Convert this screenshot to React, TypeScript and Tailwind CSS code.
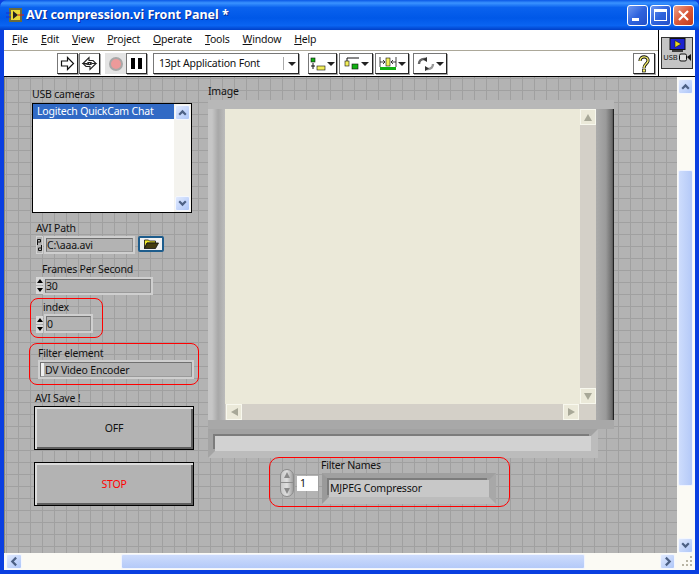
import React from "react";

const F = { fontFamily: '"Noto Sans", Tahoma, sans-serif' };

function Arrow({ d, className = "" }: { d: "up" | "down" | "left" | "right"; className?: string }) {
  const p = { up: "M2 7l3-3 3 3", down: "M2 3l3 3 3-3", left: "M6.5 1.5L3 5l3.5 3.5", right: "M3.5 1.5L7 5 3.5 8.5" }[d];
  return (
    <svg viewBox="0 0 10 10" className={className} width="11" height="11" fill="none" stroke="#4d6185" strokeWidth="2">
      <path d={p} />
    </svg>
  );
}

function XpBtn({ d, className = "" }: { d: "up" | "down" | "left" | "right"; className?: string }) {
  return (
    <div className={"flex items-center justify-center rounded-[2px] border border-[#f4f7fe] bg-gradient-to-br from-[#e1eafe] to-[#aec6f8] " + className}>
      <Arrow d={d} />
    </div>
  );
}

function Label({ x, y, children }: { x: number; y: number; children: React.ReactNode }) {
  return (
    <div className="absolute text-[10.5px] leading-[14px] tracking-[-0.2px] text-[#111] whitespace-nowrap" style={{ left: x, top: y }}>
      {children}
    </div>
  );
}

function Box({ x, y, w, h, children, cls = "" }: { x: number; y: number; w: number; h: number; children?: React.ReactNode; cls?: string }) {
  return (
    <div
      className={"absolute box-border flex items-center border-2 border-[#cfcfcf] " + cls}
      style={{ left: x, top: y, width: w, height: h }}
    >
      <div className="flex h-full w-full items-center border border-t-[#707070] border-l-[#707070] border-r-[#8c8c8c] border-b-[#9a9a9a] bg-[#b3b3b3] text-[10.5px] leading-[14px] tracking-[-0.2px] text-[#111] whitespace-nowrap">
        {children}
      </div>
    </div>
  );
}

function Spin({ x, y }: { x: number; y: number }) {
  return (
    <div className="absolute flex w-[7px] flex-col gap-[1px]" style={{ left: x, top: y }}>
      <div className="flex h-[8px] items-center justify-center bg-[#d8d8d8]">
        <div className="h-0 w-0 border-x-[3px] border-b-[4px] border-x-transparent border-b-black" />
      </div>
      <div className="flex h-[8px] items-center justify-center bg-[#d8d8d8]">
        <div className="h-0 w-0 border-x-[3px] border-t-[4px] border-x-transparent border-t-black" />
      </div>
    </div>
  );
}

function Big({ y, color, text }: { y: number; color: string; text: string }) {
  return (
    <div
      className="absolute box-border flex h-[44px] w-[160px] items-center justify-center border border-black bg-[#b3b3b3] pt-[1px] text-[10.5px] tracking-[-0.2px]"
      style={{ left: 34, top: y, color, boxShadow: "inset 2px 2px 0 0 #dcdcdc, inset -2px -2px 0 0 #5e5e5e" }}
    >
      {text}
    </div>
  );
}

function RedBox({ x, y, w, h, r = 8 }: { x: number; y: number; w: number; h: number; r?: number }) {
  return <div className="absolute box-border border border-[#f00]" style={{ left: x, top: y, width: w, height: h, borderRadius: r }} />;
}

function ToolBtn({ children, w = 22, cls = "" }: { children: React.ReactNode; w?: number; cls?: string }) {
  return (
    <div
      className={"box-border flex h-[21px] items-center justify-center border border-t-[#777] border-l-[#777] border-r-[#222] border-b-[#222] bg-white shadow-[1px_1px_0_#a8a8a8] " + cls}
      style={{ width: w }}
    >
      {children}
    </div>
  );
}

const Caret = () => <div className="ml-[1px] h-0 w-0 border-x-[4px] border-t-[4px] border-x-transparent border-t-[#222]" />;

function WinBtn({ children, red }: { children: React.ReactNode; red?: boolean }) {
  return (
    <div
      className={
        "flex h-[21px] w-[21px] items-center justify-center rounded-[3px] border border-white " +
        (red ? "bg-gradient-to-br from-[#e9a08a] via-[#d9593a] to-[#c23a1a]" : "bg-gradient-to-br from-[#6f97f0] via-[#2f63dd] to-[#2450c8]")
      }
    >
      {children}
    </div>
  );
}

export default function App() {
  return (
    <div className="flex h-[574px] w-[699px] flex-col overflow-hidden bg-[#0a3fe0]" style={F}>
      {/* title bar */}
      <div className="flex h-[30px] shrink-0 items-center rounded-t-[7px] bg-[linear-gradient(to_bottom,#0a58e6_0%,#3a93ff_10%,#0a62ee_25%,#0058e8_60%,#0a64f2_85%,#0040c8_100%)] pl-[6px] pr-[5px]">
        <svg width="18" height="16" viewBox="0 0 18 16" className="shrink-0">
          <rect x="3" y="1" width="13" height="14" fill="#6b6b3a" />
          <rect x="5" y="3" width="9" height="10" fill="#e7d83a" />
          <path d="M7 4l5 4-5 4z" fill="#222" />
          <path d="M0 6h5M0 10h5" stroke="#1a2fd0" />
          <path d="M12 8h6" stroke="#e01818" />
        </svg>
        <div className="ml-[2px] text-[12.5px] font-bold leading-none text-white [text-shadow:1px_1px_0_#0a2a90]">AVI compression.vi Front Panel *</div>
        <div className="ml-auto flex gap-[2px]">
          <WinBtn><div className="mt-[9px] mr-[4px] h-[3px] w-[7px] bg-white" /></WinBtn>
          <WinBtn><div className="h-[12px] w-[13px] border border-t-[3px] border-white" /></WinBtn>
          <WinBtn red>
            <svg width="13" height="13" viewBox="0 0 13 13"><path d="M2 2l9 9M11 2l-9 9" stroke="#fff" strokeWidth="2.2" /></svg>
          </WinBtn>
        </div>
      </div>

      {/* client */}
      <div className="mx-[4px] mb-[4px] flex min-h-0 flex-1 flex-col bg-white">
        {/* menus + toolbar + icon */}
        <div className="flex h-[47px] shrink-0 border-b border-black">
          <div className="flex min-w-0 flex-1 flex-col">
            <div className="flex h-[21px] shrink-0 items-center gap-[13px] border-b border-[#aca899] pl-[8px] text-[10.5px] tracking-[-0.2px] text-[#111]">
              <span><u>F</u>ile</span>
              <span><u>E</u>dit</span>
              <span><u>V</u>iew</span>
              <span><u>P</u>roject</span>
              <span><u>O</u>perate</span>
              <span><u>T</u>ools</span>
              <span><u>W</u>indow</span>
              <span><u>H</u>elp</span>
            </div>
            <div className="flex flex-1 items-center pl-[53px]">
              <ToolBtn w={21}>
                <svg width="15" height="15" viewBox="0 0 15 15"><path d="M1.5 5h6V1.5l6 6-6 6V10h-6z" fill="#fff" stroke="#111" strokeWidth="1.2" /></svg>
              </ToolBtn>
              <ToolBtn w={21} cls="ml-[1px]">
                <svg width="17" height="17" viewBox="0 0 17 17" fill="none" stroke="#222" strokeWidth="1.1">
                  <path d="M2 8.5L8 2.5v3h4l3 3h-4l-1-1H7l1 2z" />
                  <path d="M15 8.5L9 14.5v-3H5l-3-3h4l1 1h3l-1-2" />
                </svg>
              </ToolBtn>
              <div className="ml-[5px] flex h-[21px] w-[21px] items-center justify-center bg-[#e4e4e4]">
                <div className="h-[14px] w-[14px] rounded-full border-2 border-[#a8a8a8] bg-[#ec9a9a]" />
              </div>
              <ToolBtn w={21}>
                <div className="flex gap-[3px]"><div className="h-[11px] w-[4px] bg-black" /><div className="h-[11px] w-[4px] bg-black" /></div>
              </ToolBtn>
              <div className="ml-[6px] box-border flex h-[21px] w-[146px] items-center border border-t-[#777] border-l-[#777] border-r-[#222] border-b-[#222] pl-[5px] text-[10.5px] tracking-[-0.2px] text-[#111] shadow-[1px_1px_0_#a8a8a8]">
                <span>13pt Application Font</span>
                <div className="ml-auto flex h-full w-[18px] items-center justify-center py-[3px]">
                  <div className="mr-[3px] h-full w-[1px] bg-[#aaa]" />
                  <Caret />
                </div>
              </div>
              <ToolBtn w={29} cls="ml-[9px]">
                <svg width="16" height="16" viewBox="0 0 16 16">
                  <rect x="1" y="2" width="4" height="4" fill="#12b012" stroke="#111" strokeWidth=".6" />
                  <path d="M3 7v6M1 10h4" stroke="#111" />
                  <rect x="7" y="10" width="8" height="4" fill="#f3ee5a" stroke="#111" strokeWidth=".6" />
                </svg>
                <Caret />
              </ToolBtn>
              <ToolBtn w={34} cls="ml-[2px]">
                <svg width="16" height="16" viewBox="0 0 16 16">
                  <rect x="1" y="5" width="4" height="5" fill="#f3ee5a" stroke="#111" strokeWidth=".6" />
                  <path d="M3 2h12M3 2v3" stroke="#111" fill="none" />
                  <rect x="8" y="8" width="6" height="5" fill="#12b012" stroke="#111" strokeWidth=".6" />
                </svg>
                <Caret />
              </ToolBtn>
              <ToolBtn w={34} cls="ml-[2px]">
                <svg width="18" height="16" viewBox="0 0 18 16">
                  <rect x="7" y="2" width="4" height="8" fill="#f3ee5a" stroke="#111" strokeWidth=".6" />
                  <path d="M1 6h5M4 4l2 2-2 2M17 6h-5M14 4l-2 2 2 2M1 1v10M17 1v10" stroke="#111" fill="none" strokeWidth=".8" />
                  <rect x="1" y="11" width="16" height="3" fill="#12b012" />
                </svg>
                <Caret />
              </ToolBtn>
              <ToolBtn w={34} cls="ml-[4px]">
                <svg width="18" height="16" viewBox="0 0 18 16" fill="none">
                  <path d="M2 8c0-3 2-5 5-5h3" stroke="#666" strokeWidth="2.4" />
                  <path d="M16 8c0 3-2 5-5 5H8" stroke="#999" strokeWidth="2.4" />
                  <path d="M10 1l-4 2.5L10 6zM8 10l4 2.5L8 15z" fill="#333" />
                </svg>
                <Caret />
              </ToolBtn>
              <ToolBtn cls="ml-auto mr-[3px]">
                <svg width="14" height="18" viewBox="0 0 14 18" fill="none">
                  <path d="M3 6c0-6 9-5 8 0-.6 3-4 3-4 7" stroke="#111" strokeWidth="3.2" />
                  <path d="M3 6c0-6 9-5 8 0-.6 3-4 3-4 7" stroke="#f4ee6a" strokeWidth="1.4" />
                  <rect x="5.5" y="14" width="3" height="3" fill="#f4ee6a" stroke="#111" strokeWidth=".7" />
                </svg>
              </ToolBtn>
            </div>
          </div>
          <div className="flex w-[37px] shrink-0 items-center justify-center border-l border-black">
            <div className="flex h-[32px] w-[32px] flex-col items-center border border-[#333] bg-[#c4c4c4]">
              <svg width="17" height="15" viewBox="0 0 17 15">
                <rect x="1" y="0.5" width="15" height="11" fill="#1c22d0" stroke="#111" />
                <path d="M6 2.5l6 3.5-6 3.5z" fill="#e8d820" stroke="#111" strokeWidth=".5" />
                <path d="M3 13h11" stroke="#111" strokeWidth="1.5" />
              </svg>
              <div className="flex items-center text-[7.5px] leading-[9px] text-[#111]">
                USB
                <svg width="12" height="9" viewBox="0 0 12 9" className="ml-[1px]">
                  <rect x="0.5" y="1" width="7" height="7" rx="1.5" fill="#ddd" stroke="#111" />
                  <path d="M8 4l4-3v7z" fill="#111" />
                </svg>
              </div>
            </div>
          </div>
        </div>

        {/* canvas row */}
        <div className="flex min-h-0 flex-1">
          <div className="relative min-w-0 flex-1 overflow-hidden border-l border-[#8a8a7a] bg-[#b3b3b3] bg-[linear-gradient(to_right,#a0a0a0_1px,transparent_1px),linear-gradient(to_bottom,#a0a0a0_1px,transparent_1px)] bg-[size:12px_12px] bg-[position:1px_1px]">
            {/* all children are positioned in window coordinates minus canvas origin */}
            <div className="absolute left-[-5px] top-[-77px] h-[574px] w-[699px]">
              <Label x={32} y={87}>USB cameras</Label>
              <div className="absolute box-border flex h-[110px] w-[160px] border border-black bg-white" style={{ left: 32, top: 103 }}>
                <div className="h-[15px] flex-1 bg-[#316ac5] pl-[4px] text-[10.5px] leading-[15px] tracking-[-0.2px] text-white whitespace-nowrap">Logitech QuickCam Chat</div>
                <div className="flex w-[17px] flex-col justify-between bg-[#f4f3ee] py-[1px] pl-[1px]">
                  <XpBtn d="up" className="h-[15px] w-[15px]" />
                  <XpBtn d="down" className="h-[15px] w-[15px]" />
                </div>
              </div>

              <Label x={36} y={221}>AVI Path</Label>
              <div className="absolute flex h-[18px] w-[7px] items-center justify-center border border-[#d2d2d2] bg-[#b3b3b3]" style={{ left: 36, top: 236 }}>
                <svg width="5" height="12" viewBox="0 0 5 12" fill="none" stroke="#111"><path d="M.5 6V.5h3V3h-3M4.5 6v5.5h-3V9h3" /></svg>
              </div>
              <Box x={44} y={236} w={91} h={18}>C:\aaa.avi</Box>
              <div className="absolute box-border flex h-[16px] w-[26px] items-center justify-center rounded-[2px] border-2 border-[#1d5c8c] bg-[#f2f2f2]" style={{ left: 138, top: 236 }}>
                <svg width="15" height="10" viewBox="0 0 15 10"><path d="M.5 1h4l1 1h6v2H3l-2.5 5.5z" fill="#f2e92a" stroke="#111" strokeWidth=".8" /><path d="M3 4h11.5l-3 5.5H.5z" fill="#443c10" stroke="#111" strokeWidth=".8" /></svg>
              </div>

              <Label x={42} y={262}>Frames Per Second</Label>
              <Spin x={36} y={277} />
              <Box x={43} y={277} w={110} h={18}>30</Box>

              <RedBox x={30} y={298} w={73} h={40} />
              <Label x={43} y={300}>index</Label>
              <Spin x={36} y={316} />
              <Box x={44} y={314} w={49} h={19}>0</Box>

              <RedBox x={29} y={343} w={170} h={42} />
              <Label x={38} y={346}>Filter element</Label>
              <Box x={38} y={360} w={156} h={19}><div className="mr-[1px] h-full w-[3px] bg-[#f0f0f0]" />DV Video Encoder</Box>

              <Label x={35} y={391}>AVI Save !</Label>
              <Big y={406} color="#111" text="OFF" />
              <Big y={462} color="#f00" text="STOP" />

              <Label x={208} y={84}>Image</Label>
              {/* image frame */}
              <div className="absolute box-border flex h-[329px] w-[406px] border-t-[9px] border-b-[9px] border-t-[#b8b8b8] border-b-[#a8a8a8] bg-[linear-gradient(to_right,#c6c6c6_0%,#c6c6c6_1%,#a8a8a8_2.5%,#bcbcbc_4.2%,#b0b0b0_95%,#9a9a9a_98%,#686868_99.6%,#222_99.8%)]" style={{ left: 208, top: 100 }}>
                <div className="ml-[17px] mr-[18px] flex min-w-0 flex-1">
                  <div className="flex min-w-0 flex-1 flex-col bg-[#ebe9d9]">
                    <div className="flex-1" />
                    <div className="flex h-[16px] justify-between bg-[#d4d0c8] px-[1px]">
                      <div className="flex h-[16px] w-[16px] items-center justify-center border border-[#f8f8ee] bg-[#ebe9d9]"><div className="h-0 w-0 border-y-[4px] border-r-[7px] border-y-transparent border-r-[#a8a898]" /></div>
                      <div className="flex h-[16px] w-[16px] items-center justify-center border border-[#f8f8ee] bg-[#ebe9d9]"><div className="h-0 w-0 border-y-[4px] border-l-[7px] border-y-transparent border-l-[#a8a898]" /></div>
                    </div>
                  </div>
                  <div className="flex w-[16px] flex-col bg-[#d4d0c8] pb-[16px]">
                    <div className="flex h-[16px] w-[16px] items-center justify-center border border-[#f8f8ee] bg-[#ebe9d9]"><div className="h-0 w-0 border-x-[4px] border-b-[7px] border-x-transparent border-b-[#a8a898]" /></div>
                    <div className="flex-1" />
                    <div className="flex h-[16px] w-[16px] items-center justify-center border border-[#f8f8ee] bg-[#ebe9d9]"><div className="h-0 w-0 border-x-[4px] border-t-[7px] border-x-transparent border-t-[#a8a898]" /></div>
                  </div>
                </div>
              </div>
              {/* string indicator under the image */}
              <div className="absolute box-border h-[29px] w-[390px] border-[7px] border-t-[#a2a2a2] border-l-[#a4a4a4] border-r-[#bcbcbc] border-b-[#bcbcbc]" style={{ left: 208, top: 429 }}>
                <div className="h-full w-full bg-[#d2d2d2] shadow-[-2px_-2px_0_#7c7c7c]" />
              </div>

              {/* Filter Names */}
              <RedBox x={269} y={457} w={241} h={50} r={10} />
              <Label x={321} y={458}>Filter Names</Label>
              <div className="absolute flex h-[28px] w-[14px] flex-col items-center justify-around rounded-full border border-[#8c8c8c] bg-gradient-to-r from-[#c8c8c8] via-[#e0e0e0] to-[#a0a0a0]" style={{ left: 280, top: 469 }}>
                <div className="h-0 w-0 border-x-[3px] border-b-[6px] border-x-transparent border-b-[#8a8a8a]" />
                <div className="h-[1px] w-full bg-[#8c8c8c]" />
                <div className="h-0 w-0 border-x-[3px] border-t-[6px] border-x-transparent border-t-[#8a8a8a]" />
              </div>
              <div className="absolute flex h-[15px] w-[21px] items-center bg-white pl-[3px] text-[10.5px] text-[#111]" style={{ left: 297, top: 476 }}>1</div>
              <div className="absolute box-border h-[31px] w-[174px] border-[7px] border-t-[#a0a0a0] border-l-[#9a9a9a] border-r-[#a8a8a8] border-b-[#bcbcbc]" style={{ left: 322, top: 473 }}>
                <div className="flex h-full w-full items-center bg-[#c8c8c8] pl-[1px] text-[10.5px] tracking-[-0.2px] text-[#111] whitespace-nowrap shadow-[-2px_-2px_0_#7c7c7c]">MJPEG Compressor</div>
              </div>
            </div>
          </div>
          {/* v scrollbar */}
          <div className="flex w-[18px] shrink-0 flex-col bg-[#fbfaf4] pl-[1px] pr-[2px] pt-[2px]">
            <XpBtn d="up" className="h-[15px] w-[15px]" />
            <div className="mt-[76px] h-[316px] w-[15px] rounded-[2px] border border-[#f0f4ff] bg-gradient-to-r from-[#cddcfc] to-[#b4c9f8]" />
            <div className="flex-1" />
            <XpBtn d="down" className="h-[15px] w-[15px]" />
          </div>
        </div>

        {/* h scrollbar */}
        <div className="flex h-[17px] shrink-0 items-center bg-[#fbfaf4] pl-[2px]">
          <XpBtn d="left" className="h-[15px] w-[16px]" />
          <div className="ml-[99px] h-[15px] w-[464px] rounded-[2px] border border-[#f0f4ff] bg-gradient-to-b from-[#cddcfc] to-[#b4c9f8]" />
          <div className="flex-1" />
          <XpBtn d="right" className="h-[15px] w-[15px]" />
          <div className="ml-[4px] flex w-[16px] justify-end pr-[1px]">
            <svg width="13" height="13" viewBox="0 0 13 13" fill="#b8b4a4">
              <rect x="9" y="1" width="2" height="2" /><rect x="5" y="5" width="2" height="2" /><rect x="9" y="5" width="2" height="2" />
              <rect x="1" y="9" width="2" height="2" /><rect x="5" y="9" width="2" height="2" /><rect x="9" y="9" width="2" height="2" />
            </svg>
          </div>
        </div>
      </div>
    </div>
  );
}
